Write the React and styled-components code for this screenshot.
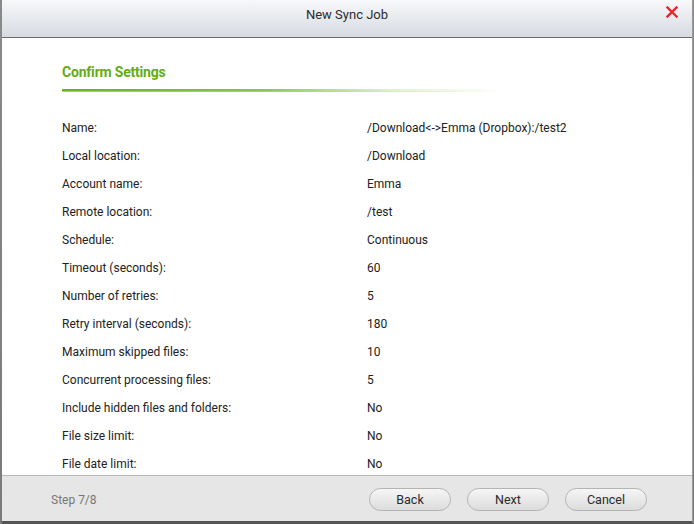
import React from 'react'
import styled, { createGlobalStyle } from 'styled-components'

const GlobalStyle = createGlobalStyle`
  html, body {
    margin: 0;
    padding: 0;
    background: #8a8a8a;
  }
  body {
    font-family: Roboto, "Liberation Sans", Arial, sans-serif;
  }
`

const Screen = styled.div`
  width: 694px;
  height: 524px;
  display: flex;
  background: linear-gradient(#8a8a8a, #7a7a7a);
  overflow: hidden;
`

const Dialog = styled.div`
  margin-left: 2px;
  width: 690px;
  height: 521px;
  display: flex;
  flex-direction: column;
  background: #fff;
  border-right: 1px solid #9a9a9a;
  border-bottom: 3px solid #555;
`

const Header = styled.div`
  height: 37px;
  flex-shrink: 0;
  display: flex;
  align-items: center;
  justify-content: center;
  position: relative;
  background: linear-gradient(#f7f8fa, #d6dbe1);
  border-bottom: 1px solid #6b6b6b;
`

const Title = styled.div`
  font-size: 13px;
  color: #2b2b2b;
  margin-top: -8px;
`

const Close = styled.svg`
  position: absolute;
  right: 14px;
  top: 6px;
`

const Body = styled.div`
  flex: 1;
  padding: 25px 0 0 60px;
  overflow: hidden;
`

const SectionTitle = styled.div`
  font-size: 14px;
  font-weight: 700;
  color: #63ad12;
  letter-spacing: -0.2px;
  height: 18px;
  line-height: 18px;
`

const Rule = styled.div`
  margin-top: 8px;
  width: 440px;
  height: 2px;
  background: linear-gradient(to right, #6bb11c 0%, #8cc44a 45%, rgba(180, 220, 140, 0.4) 75%, rgba(255,255,255,0) 100%);
  border-bottom: 1px solid transparent;
  border-image: linear-gradient(to right, #a4d46a, rgba(200,230,170,0.3) 80%, rgba(255,255,255,0)) 1;
`

const Rows = styled.div`
  margin-top: 28px;
  display: flex;
  flex-direction: column;
`

const Row = styled.div`
  display: grid;
  grid-template-columns: 305px 1fr;
  height: 28px;
  line-height: 16px;
  font-size: 12px;
  color: #222;
`

const Footer = styled.div`
  height: 46px;
  flex-shrink: 0;
  display: flex;
  align-items: center;
  background: #e6e6e6;
  border-top: 1px solid #b8b8b8;
  padding: 2px 45px 0 49px;
  box-sizing: border-box;
`

const Step = styled.div`
  font-size: 12px;
  color: #777;
  flex: 1;
`

const Buttons = styled.div`
  display: flex;
  gap: 16px;
`

const Button = styled.button`
  width: 82px;
  height: 23px;
  border-radius: 12px;
  border: 1px solid #b4b4b4;
  background: linear-gradient(#f6f6f6, #dcdcdc);
  font-family: Roboto, "Liberation Sans", Arial, sans-serif;
  font-size: 12.5px;
  color: #2a2a2a;
  padding: 0;
  cursor: pointer;
`

const rows = [
  ['Name:', '/Download<->Emma (Dropbox):/test2'],
  ['Local location:', '/Download'],
  ['Account name:', 'Emma'],
  ['Remote location:', '/test'],
  ['Schedule:', 'Continuous'],
  ['Timeout (seconds):', '60'],
  ['Number of retries:', '5'],
  ['Retry interval (seconds):', '180'],
  ['Maximum skipped files:', '10'],
  ['Concurrent processing files:', '5'],
  ['Include hidden files and folders:', 'No'],
  ['File size limit:', 'No'],
  ['File date limit:', 'No'],
]

export default function App() {
  return (
    <>
      <GlobalStyle />
      <Screen>
        <Dialog>
          <Header>
            <Title>New Sync Job</Title>
            <Close width="12" height="12" viewBox="0 0 12 12">
              <path d="M1.5 1.5 L10.5 10.5 M10.5 1.5 L1.5 10.5" stroke="#e8262b" strokeWidth="2.4" strokeLinecap="square" />
            </Close>
          </Header>
          <Body>
            <SectionTitle>Confirm Settings</SectionTitle>
            <Rule />
            <Rows>
              {rows.map(([k, v]) => (
                <Row key={k}>
                  <span>{k}</span>
                  <span>{v}</span>
                </Row>
              ))}
            </Rows>
          </Body>
          <Footer>
            <Step>Step 7/8</Step>
            <Buttons>
              <Button>Back</Button>
              <Button>Next</Button>
              <Button>Cancel</Button>
            </Buttons>
          </Footer>
        </Dialog>
      </Screen>
    </>
  )
}
